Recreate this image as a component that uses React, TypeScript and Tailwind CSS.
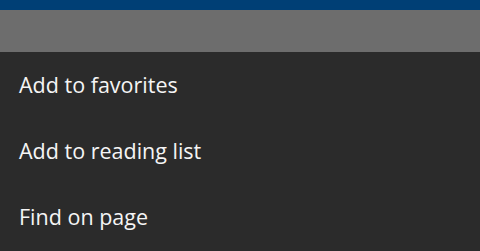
import React from "react"

const ITEMS = ["Add to favorites", "Add to reading list", "Find on page"]

export default function App() {
  return (
    <div className="w-[480px] h-[251px] overflow-hidden bg-[#2b2b2b] flex flex-col" style={{ fontFamily: '"Open Sans", "Noto Sans", sans-serif' }}>
      <div className="h-[10px] bg-[#003f75] shrink-0" />
      <div className="h-[42px] bg-[#6d6d6d] shrink-0" />
      <ul className="flex flex-col">
        {ITEMS.map(label => (
          <li key={label} className="h-[66px] flex items-center px-[19px] text-[21.5px] leading-none text-[#f5f5f5]">
            {label}
          </li>
        ))}
      </ul>
    </div>
  )
}
